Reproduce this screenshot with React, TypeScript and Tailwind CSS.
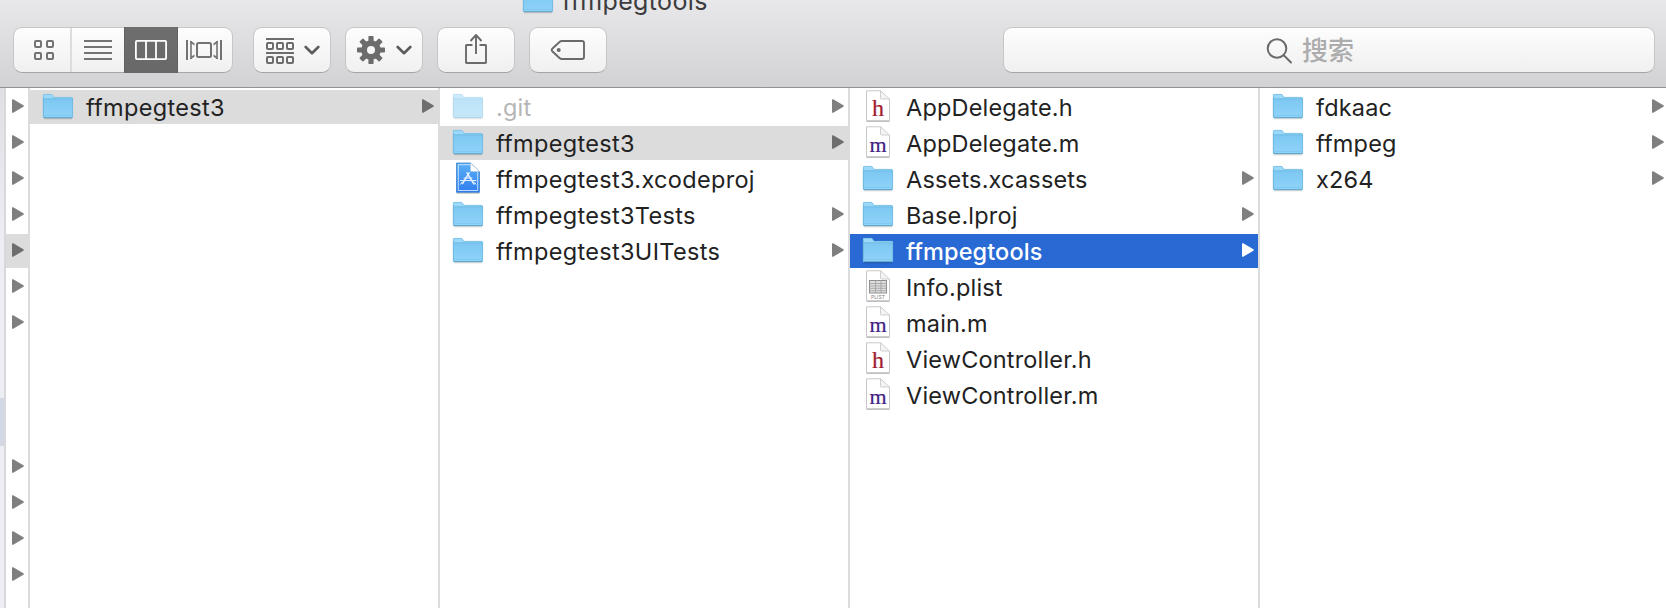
import React from "react";

type Kind = "folder" | "h" | "m" | "plist" | "xcode";
type Item = {
  name: string;
  kind: Kind;
  state?: "dim" | "path" | "active";
};

function FolderIcon({ dim = false }: { dim?: boolean }) {
  return (
    <svg width="32" height="28" viewBox="0 0 32 28" className={dim ? "opacity-50" : ""}>
      <defs>
        <linearGradient id="folderFront" x1="0" y1="0" x2="0" y2="1">
          <stop offset="0" stopColor="#7cc8f2" />
          <stop offset="1" stopColor="#90d3f9" />
        </linearGradient>
      </defs>
      <path d="M2 25.5h28" stroke="#000" strokeOpacity=".16" strokeWidth="1.6" />
      <path d="M1 24V2.2Q1 1 2.2 1H9q1 0 1.6.9L12 4h17.8Q31 4 31 5.200V24Q31 25 30 25H2Q1 25 1 24Z" fill="#9bd8fa" />
      <path d="M1 6h30v18q0 1-1 1H2q-1 0-1-1Z" fill="url(#folderFront)" />
      <path d="M1 5.800h30" stroke="#6db9e2" strokeWidth=".9" />
      <path d="M1.400 24V2.200Q1.400 1.400 2.200 1.400H9q1 0 1.600.9L12 4.400h17.800" fill="none" stroke="#78bfe5" strokeWidth=".8" />
      <path d="M1.400 4v20M30.600 5v19" stroke="#6fb6dc" strokeWidth=".8" />
      <path d="M1 22.500h30" stroke="#7fc4ea" strokeWidth=".7" />
      <path d="M1.500 24.600h29" stroke="#5fa5cc" strokeWidth="1" />
    </svg>
  );
}

function DocIcon({ kind }: { kind: Kind }) {
  return (
    <svg width="32" height="34" viewBox="0 0 32 34">
      <path d="M4.500 31.400h23" stroke="#000" strokeOpacity=".25" strokeWidth="1.200" />
      <path d="M4.500 .8h14L27.500 9.800V30.600h-23Z" fill="#fff" stroke="#c8c8c8" strokeWidth="1" />
      <path d="M18.500 .8v7.400q0 .8.8.8h8.200Z" fill="#f4f4f4" stroke="#cbcbcb" strokeWidth=".9" />
      {kind === "h" && (
        <text x="16" y="26" textAnchor="middle" fontSize="24" fill="#a01c2e" stroke="#a01c2e" strokeWidth=".2" fontFamily="Liberation Serif, serif">h</text>
      )}
      {kind === "m" && (
        <text x="16" y="25.500" textAnchor="middle" fontSize="22" fill="#412082" stroke="#412082" strokeWidth=".2" fontFamily="Liberation Serif, serif">m</text>
      )}
      {kind === "plist" && (
        <>
          <rect x="7.500" y="10.500" width="17" height="12.500" fill="#dedede" stroke="#8f8f8f" />
          <path d="M7.500 13.500h17M7.500 15.900h17M7.500 18.300h17M7.500 20.700h17M13.500 10.500v12.500M19 10.500v12.500" stroke="#a0a0a0" strokeWidth=".8" />
          <text x="16" y="29" textAnchor="middle" fontSize="5" fill="#808080" fontFamily="Inter, sans-serif">PLIST</text>
        </>
      )}
    </svg>
  );
}

function XcodeIcon() {
  return (
    <svg width="32" height="34" viewBox="0 0 32 34">
      <defs>
        <linearGradient id="xcodeFill" x1="0" y1="0" x2="0" y2="1">
          <stop offset="0" stopColor="#5ab0f5" />
          <stop offset="1" stopColor="#2f7df0" />
        </linearGradient>
      </defs>
      <path d="M4.500 31h23" stroke="#000" strokeOpacity=".3" strokeWidth="1.200" />
      <path d="M4.500 1h14L27.500 9.500V30.300h-23Z" fill="url(#xcodeFill)" stroke="#3a7fce" strokeWidth=".8" />
      <path d="M18 2.700H6.300V28.500H25.700V10" fill="none" stroke="#cfe6ff" strokeWidth=".9" />
      <path d="M18.500 1v7.500q0 1 1 1h8Z" fill="#fff" stroke="#b9c9da" strokeWidth=".6" />
      <g fill="none" stroke="#e3f1ff" strokeLinecap="round">
        <path d="M15 10.800L22 22M17.200 10.800L10.500 21.500" strokeWidth="1.500" />
        <path d="M8.500 18.500h15.500M12 16h8" strokeWidth="1.100" />
        <path d="M10 20.200l-1.500 2M22.500 20.500l1.500 1.700" strokeWidth="1" />
      </g>
    </svg>
  );
}

function Arrow({ color = "#7f7f7f" }: { color?: string }) {
  return (
    <svg width="12" height="14" viewBox="0 0 12 14" className="shrink-0">
      <path d="M0 .8Q0-.2 1.200.3L11.400 6.300Q12.200 7 11.400 7.700L1.200 13.700Q0 14.200 0 13.200Z" fill={color} />
    </svg>
  );
}

function Row({ item }: { item: Item }) {
  const { kind, state, name } = item;
  const isFolder = kind === "folder";
  const bg = state === "path" ? "bg-[#dcdcdc]" : state === "active" ? "bg-[#2869d4]" : "";
  const color =
    state === "dim" ? "text-[#b5b5b5]" : state === "active" ? "text-white font-medium" : "text-[#222] font-[430]";
  const tracking = name.startsWith("ffmpegtest")
    ? "tracking-[0.32px]"
    : state === "active"
      ? "tracking-[0.1px]"
      : "tracking-[0.18px]";
  const arrow = state === "path" ? "#6e6e6e" : state === "active" ? "#fff" : "#7f7f7f";
  return (
    <div className="h-9 pt-0.5">
      <div className={`flex h-[34px] items-start pl-3 pr-1 ${bg}`}>
        <div className={isFolder ? "w-8 pt-[3px]" : "w-8"}>
          {isFolder ? <FolderIcon dim={state === "dim"} /> : kind === "xcode" ? <XcodeIcon /> : <DocIcon kind={kind} />}
        </div>
        <div className={`ml-3 flex-1 text-[23.500px] leading-[35px] whitespace-nowrap ${tracking} ${color}`}>{name}</div>
        {isFolder && (
          <div className="pt-[9px]">
            <Arrow color={arrow} />
          </div>
        )}
      </div>
    </div>
  );
}

function Column({ items }: { items: Item[] }) {
  return (
    <div className="w-[410px] shrink-0 border-r-2 border-[#dcdcdc]">
      {items.map((item) => (
        <Row key={item.name} item={item} />
      ))}
    </div>
  );
}

const projectColumn: Item[] = [{ name: "ffmpegtest3", kind: "folder", state: "path" }];
const targetColumn: Item[] = [
  { name: ".git", kind: "folder", state: "dim" },
  { name: "ffmpegtest3", kind: "folder", state: "path" },
  { name: "ffmpegtest3.xcodeproj", kind: "xcode" },
  { name: "ffmpegtest3Tests", kind: "folder" },
  { name: "ffmpegtest3UITests", kind: "folder" },
];
const sourceColumn: Item[] = [
  { name: "AppDelegate.h", kind: "h" },
  { name: "AppDelegate.m", kind: "m" },
  { name: "Assets.xcassets", kind: "folder" },
  { name: "Base.lproj", kind: "folder" },
  { name: "ffmpegtools", kind: "folder", state: "active" },
  { name: "Info.plist", kind: "plist" },
  { name: "main.m", kind: "m" },
  { name: "ViewController.h", kind: "h" },
  { name: "ViewController.m", kind: "m" },
];
const libraryColumn: Item[] = [
  { name: "fdkaac", kind: "folder" },
  { name: "ffmpeg", kind: "folder" },
  { name: "x264", kind: "folder" },
];

type ParentCell = "arrow" | "path" | "none";
const parentCells: ParentCell[] = [
  "arrow", "arrow", "arrow", "arrow", "path", "arrow", "arrow",
  "none", "none", "none", "arrow", "arrow", "arrow", "arrow",
];

function ParentColumn() {
  return (
    <div className="w-6 shrink-0 border-r-2 border-[#dcdcdc]">
      {parentCells.map((cell, i) => (
        <div key={i} className="h-9 pt-0.5">
          <div className={`h-[34px] pt-[9px] pl-1.5 ${cell === "path" ? "bg-[#dcdcdc]" : ""}`}>
            {cell !== "none" && <Arrow color={cell === "path" ? "#6e6e6e" : "#7f7f7f"} />}
          </div>
        </div>
      ))}
    </div>
  );
}

const surface =
  "flex h-[46px] shrink-0 items-center rounded-[9px] border border-[#c6c6c7] border-b-[#a5a5a6] bg-linear-to-b from-[#fdfdfd] to-[#f0f0f0]";

function Chevron() {
  return (
    <svg width="16" height="12" viewBox="0 0 16 12" fill="none" stroke="#5c5c5c" strokeWidth="2.600" strokeLinecap="round" strokeLinejoin="round">
      <path d="M1.700 3L8 9.200 14.300 3" />
    </svg>
  );
}

function ViewSwitcher() {
  return (
    <div className={`${surface} w-[220px]`}>
      <div className="flex h-full w-[58px] items-center border-r-2 border-[#dddddd] pl-5">
        <svg width="20" height="20" viewBox="0 0 20 20" fill="none" stroke="#737373" strokeWidth="2">
          <rect x="1" y="1" width="6" height="6" rx="1" />
          <rect x="13" y="1" width="6" height="6" rx="1" />
          <rect x="1" y="13" width="6" height="6" rx="1" />
          <rect x="13" y="13" width="6" height="6" rx="1" />
        </svg>
      </div>
      <div className="flex h-full w-[52px] items-center pl-3">
        <svg width="28" height="20" viewBox="0 0 28 20" stroke="#737373" strokeWidth="2">
          <path d="M0 1h28M0 7h28M0 13h28M0 19h28" />
        </svg>
      </div>
      <div className="flex h-[46px] w-[54px] shrink-0 items-center justify-center border-x border-[#616161] bg-linear-to-b from-[#6e6e6e] to-[#686868]">
        <svg width="32" height="20" viewBox="0 0 32 20" fill="none" stroke="#fff" strokeWidth="1.800" className="shrink-0">
          <rect x=".9" y=".9" width="30.200" height="18.200" rx="1" />
          <path d="M11 1v18M21 1v18" />
        </svg>
      </div>
      <div className="flex h-full flex-1 items-center pl-2">
        <svg width="36" height="20" viewBox="0 0 36 20" fill="none" stroke="#737373" strokeWidth="2" className="shrink-0">
          <path d="M1 0v20M35 0v20" />
          <path d="M5 1v18M31 1v18" strokeWidth="1.600" />
          <path d="M4.500 .5L8.500 3.500V5.500L4.500 3ZM4.500 19.500l4-3V14.500l-4 2.500ZM31.500 .5l-4 3V5.500l4-2.500ZM31.500 19.500l-4-3V14.500l4 2.500Z" fill="#737373" stroke="none" />
          <rect x="11" y="3" width="14" height="14" rx="1.500" />
        </svg>
      </div>
    </div>
  );
}

function ArrangeButton() {
  return (
    <div className={`${surface} w-[78px] pl-3`}>
      <svg width="28" height="28" viewBox="0 0 28 28" fill="none" stroke="#6c6c6c" strokeWidth="2" className="mt-1 shrink-0">
        <path d="M0 1h28M0 15h28" />
        {[5, 19].map((y) =>
          [1, 11, 21].map((x) => <rect key={`${x}-${y}`} x={x} y={y} width="6" height="6" rx="1" />)
        )}
      </svg>
      <div className="ml-2.5">
        <Chevron />
      </div>
    </div>
  );
}

function GearButton() {
  return (
    <div className={`${surface} w-[78px] pl-[11px]`}>
      <svg width="28" height="28" viewBox="-14 -14 28 28" fill="#6c6c6c" className="shrink-0">
        {[0, 45, 90, 135].map((a) => (
          <rect key={a} x="-2.600" y="-14" width="5.200" height="28" rx=".8" transform={`rotate(${a})`} />
        ))}
        <circle r="9.800" />
        <circle r="4" fill="#f7f7f7" />
      </svg>
      <div className="ml-[11px]">
        <Chevron />
      </div>
    </div>
  );
}

function ShareButton() {
  return (
    <div className={`${surface} w-[78px] justify-center`}>
      <svg width="24" height="32" viewBox="0 0 24 32" fill="none" stroke="#6a6a6a" strokeWidth="1.900" strokeLinejoin="round" className="-mt-0.5">
        <path d="M8.500 12H2.500Q2 12 2 12.500V29.500Q2 30 2.500 30H21.500Q22 30 22 29.500V12.500Q22 12 21.500 12H15.500" />
        <path d="M12 21V2M6.500 8L12 2l5.500 6" />
      </svg>
    </div>
  );
}

function TagButton() {
  return (
    <div className={`${surface} w-[78px] justify-center`}>
      <svg width="36" height="22" viewBox="0 0 36 22" fill="none" stroke="#6a6a6a" strokeWidth="1.900">
        <path d="M12 2H32Q34 2 34 4V18Q34 20 32 20H12Q10.500 20 9.500 19L2.500 12.500Q1 11 2.500 9.500L9.500 3Q10.500 2 12 2Z" />
        <circle cx="8.700" cy="11" r="2" fill="#6a6a6a" stroke="none" />
      </svg>
    </div>
  );
}

function SearchField() {
  return (
    <div className={`${surface} mr-[11px] ml-auto w-[652px] pl-[262px]`}>
      <svg width="27" height="27" viewBox="0 0 27 27" fill="none" stroke="#6a6a6a" strokeWidth="2" strokeLinecap="round">
        <circle cx="11" cy="11.500" r="9.300" />
        <path d="M18 18.500l7 7" />
      </svg>
      <div className="mt-0.5 ml-[9px] text-[26px] leading-[44px] font-medium text-[#acacac]">搜索</div>
    </div>
  );
}

export default function App() {
  return (
    <div className="flex h-[608px] w-[1666px] flex-col overflow-hidden bg-white font-['Inter','Noto_Sans_CJK_SC',sans-serif]">
      <header className="h-[88px] shrink-0 overflow-hidden border-b border-[#929292] bg-linear-to-b from-[#e8e8ea] to-[#d2d2d4]">
        <div className="flex h-[27px] items-start pl-[522px]">
          <div className="-mt-[13px]">
            <FolderIcon />
          </div>
          <div className="-mt-4 ml-2 text-[25px] leading-[35px] tracking-[0.36px] text-[#3b3b3d]">ffmpegtools</div>
        </div>
        <div className="flex pl-[13px]">
          <ViewSwitcher />
          <div className="ml-5 flex gap-3.5">
            <ArrangeButton />
            <GearButton />
            <ShareButton />
            <TagButton />
          </div>
          <SearchField />
        </div>
      </header>
      <main className="flex flex-1 overflow-hidden">
        <aside className="w-1.5 shrink-0 border-r-2 border-[#d8d8dc] bg-linear-to-b from-[#dfe0e4] via-[#edeef3] via-30% to-[#edeef3] pt-[310px]">
          <div className="h-12 bg-[#d3d9e4]" />
        </aside>
        <ParentColumn />
        <Column items={projectColumn} />
        <Column items={targetColumn} />
        <Column items={sourceColumn} />
        <Column items={libraryColumn} />
      </main>
    </div>
  );
}
